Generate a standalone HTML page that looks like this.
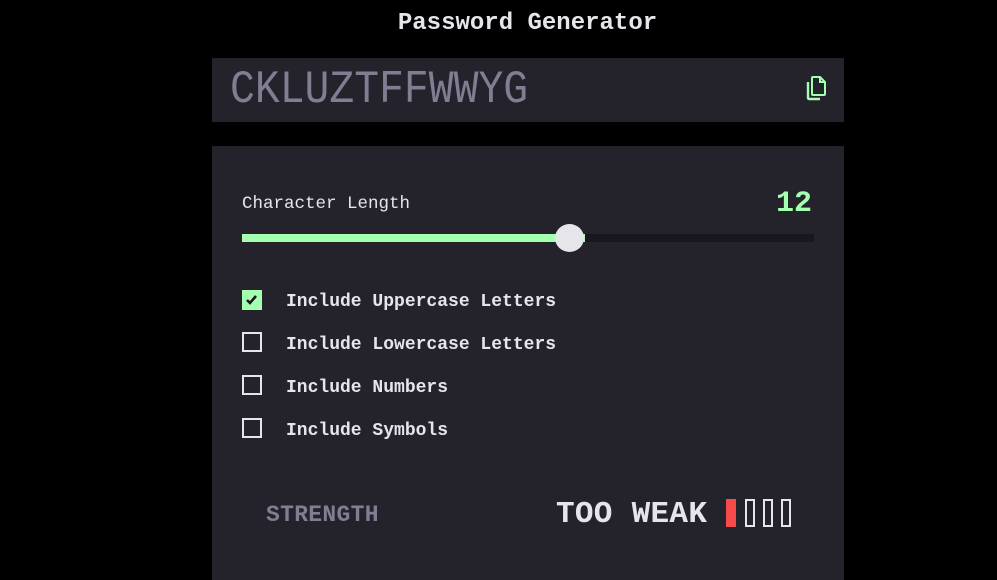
<!DOCTYPE html>
<html><head><style>
*{margin:0;padding:0;box-sizing:border-box}
body{width:997px;height:580px;background:#000;font-family:"Liberation Mono",monospace;position:relative;overflow:hidden;color:#e6e5ea}
.a{position:absolute;white-space:nowrap}
.cb{position:absolute;left:242px;width:20px;height:20px;border:2px solid #e6e5ea}
.lbl{position:absolute;left:286px;font-size:18px;font-weight:bold;line-height:20px;top:1px}
</style></head><body>
<div class="a" style="left:0;width:1055px;text-align:center;top:10px;font-size:24px;font-weight:bold;line-height:28px">Password Generator</div>
<div class="a" style="left:212px;top:58px;width:632px;height:64px;background:#24232c"></div>
<div class="a" style="left:230px;top:65px;font-size:46px;line-height:50px;color:#817d92;transform:scaleX(0.9);transform-origin:left">CKLUZTFFWWYG</div>
<svg class="a" style="left:804px;top:75px" width="24" height="26" viewBox="0 0 24 26"><path d="M9 2h7l5 5v12a1 1 0 0 1-1 1H9a1 1 0 0 1-1-1V3a1 1 0 0 1 1-1z M16 2v5h5" fill="none" stroke="#a4ffaf" stroke-width="2"/><path d="M4 7v16a1 1 0 0 0 1 1h11" fill="none" stroke="#a4ffaf" stroke-width="2.4"/></svg>
<div class="a" style="left:212px;top:146px;width:632px;height:434px;background:#24232c"></div>
<div class="a" style="left:242px;top:194px;font-size:17.5px;line-height:20px">Character Length</div>
<div class="a" style="left:776px;top:187px;font-size:30px;font-weight:bold;color:#a4ffaf;line-height:34px">12</div>
<div class="a" style="left:242px;top:234px;width:572px;height:8px;background:#18171f"></div>
<div class="a" style="left:242px;top:234px;width:343px;height:8px;background:#a4ffaf"></div>
<div class="a" style="left:555px;top:224px;width:29px;height:28px;border-radius:50%;background:#e6e5ea"></div>
<div class="cb" style="top:290px;background:#a4ffaf;border-color:#a4ffaf"><svg width="16" height="16" viewBox="0 0 16 16" style="position:absolute;left:0;top:0"><path d="M3 8l3 3 6-7" fill="none" stroke="#18171f" stroke-width="2.6"/></svg></div>
<div class="lbl" style="top:292px">Include Uppercase Letters</div>
<div class="cb" style="top:332px"></div>
<div class="lbl" style="top:335px">Include Lowercase Letters</div>
<div class="cb" style="top:375px"></div>
<div class="lbl" style="top:378px">Include Numbers</div>
<div class="cb" style="top:418px"></div>
<div class="lbl" style="top:421px">Include Symbols</div>
<div class="a" style="left:266px;top:502px;font-size:23px;font-weight:bold;color:#817d92;line-height:26px;letter-spacing:0.3px">STRENGTH</div>
<div class="a" style="left:556px;top:497px;font-size:31px;font-weight:bold;line-height:36px;letter-spacing:0.3px">TOO WEAK</div>
<div class="a" style="left:726px;top:499px;width:10px;height:28px;background:#f64a4a"></div>
<div class="a" style="left:745px;top:499px;width:10px;height:28px;border:2px solid #e6e5ea"></div>
<div class="a" style="left:763px;top:499px;width:10px;height:28px;border:2px solid #e6e5ea"></div>
<div class="a" style="left:781px;top:499px;width:10px;height:28px;border:2px solid #e6e5ea"></div>
</body></html>
